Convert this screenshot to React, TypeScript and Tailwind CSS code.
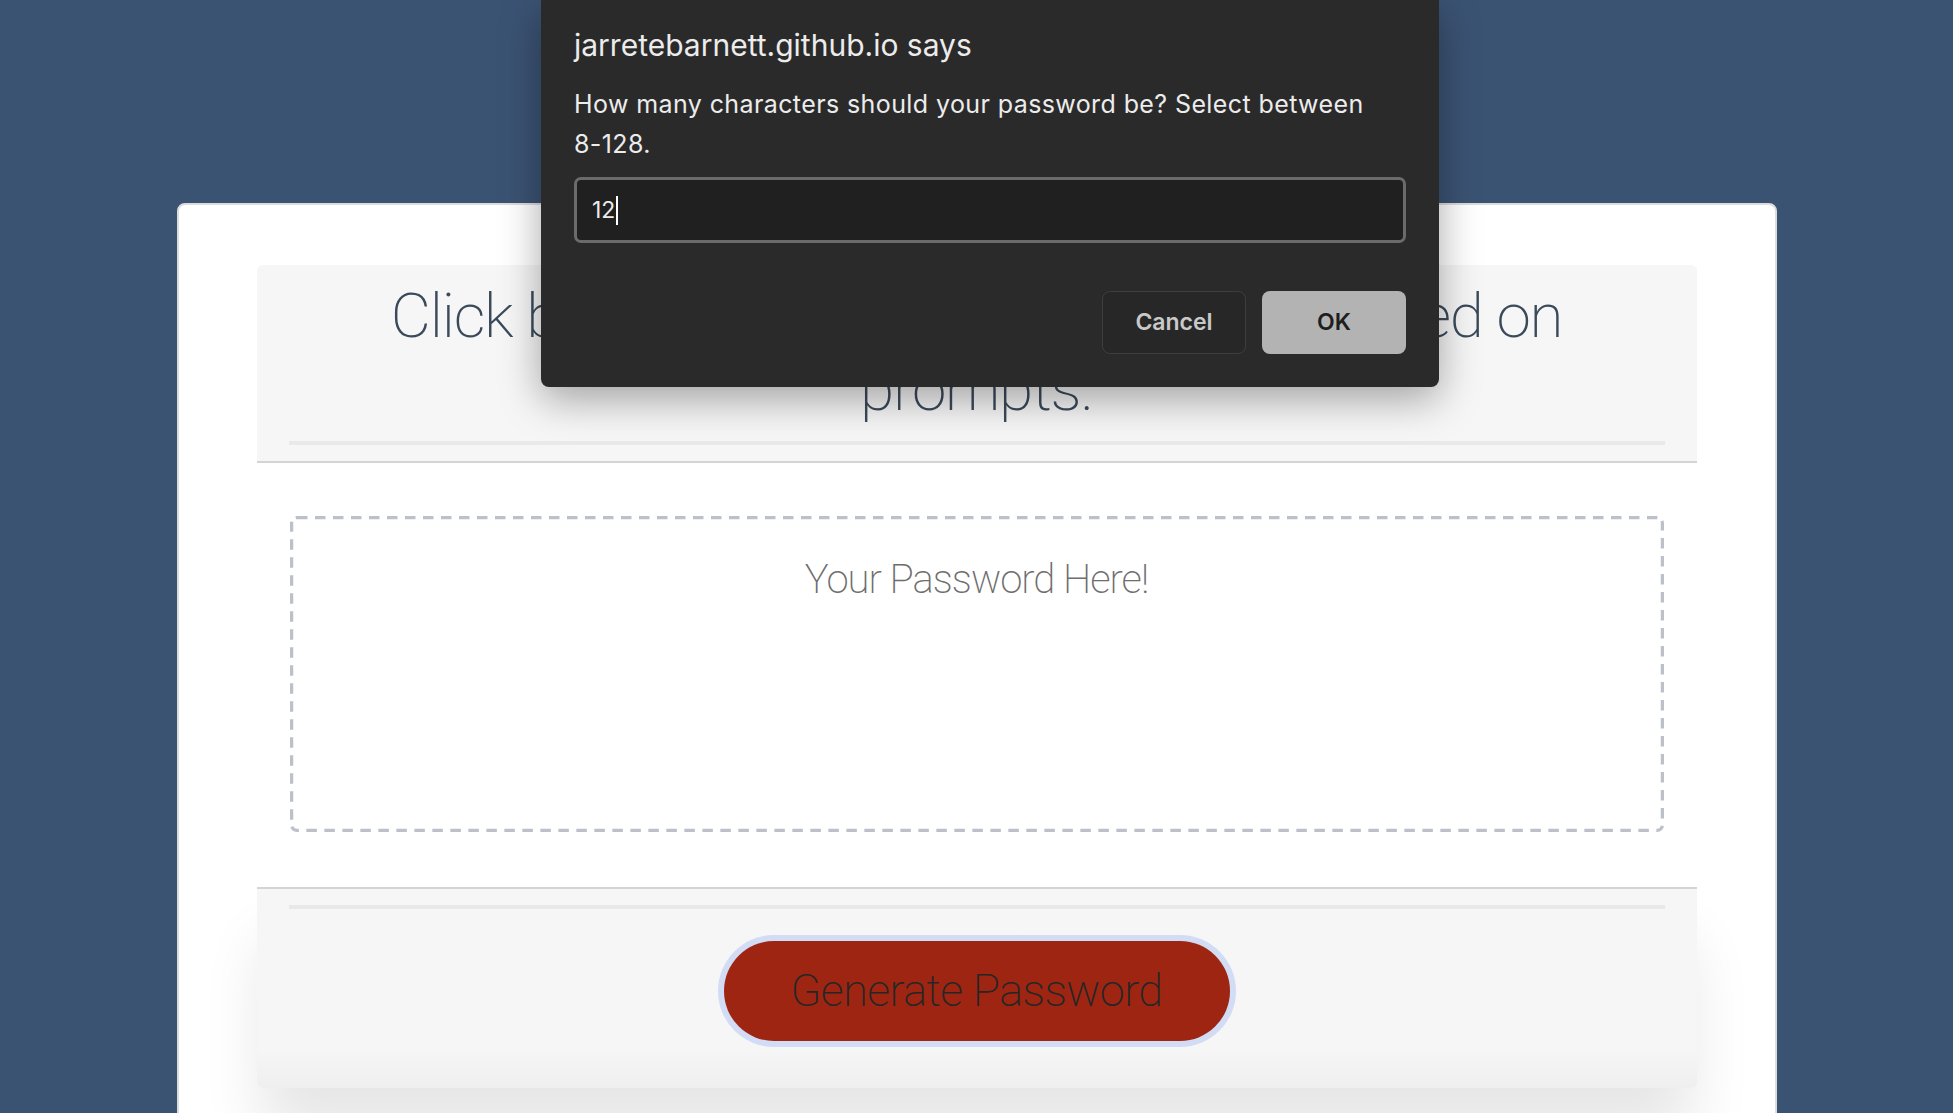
import React from "react";

export default function App() {
  return (
    <div
      className="relative h-[1113px] w-full overflow-hidden bg-[#3b5373]"
      style={{ fontFamily: "Roboto, 'Noto Sans', sans-serif" }}
    >
      {/* Page card */}
      <div className="mx-auto mt-[203px] w-[1600px] rounded-t-lg border-2 border-[#dcdcdc] bg-white px-[78px] pb-[120px] pt-[60px]">
        <div className="rounded-md bg-white">
          {/* Header */}
          <div className="rounded-t-md border-b-2 border-[#d4d4d4] bg-[#f6f6f6] px-[32px] pb-[16px] pt-[14px]">
            <h2 className="text-center text-[62px] font-extralight leading-[73px] tracking-[-1.25px] text-[#3b4a5b]">
              Click button to generate a password based on prompts.
            </h2>
            <div className="mt-[16px] h-[4px] bg-[#e8e9eb]" />
          </div>
          {/* Body */}
          <div className="px-[33px] pb-[55px] pt-[53px]">
            <div className="relative h-[316px] rounded-[7px] pt-[34px] text-center">
              <svg className="absolute inset-0 h-full w-full overflow-hidden rounded-[7px]" aria-hidden="true">
                <rect
                  x="0"
                  y="0"
                  width="100%"
                  height="100%"
                  rx="7"
                  fill="none"
                  stroke="#bcc0c9"
                  strokeWidth="6.5"
                  strokeDasharray="10.5 7.5"
                />
              </svg>
              <span className="relative text-[40px] font-extralight tracking-[-1px] text-[#6e6e6e]">
                Your Password Here!
              </span>
            </div>
          </div>
          {/* Footer */}
          <div className="rounded-b-md border-t-2 border-[#d4d4d4] bg-gradient-to-b from-[#f6f6f6] from-80% to-[#efefef] px-[32px] pb-[47px] pt-[16px] shadow-[0_50px_60px_-5px_rgba(0,0,0,0.1)]">
            <div className="h-[4px] bg-[#e8e8e8]" />
            <button className="mx-auto mt-[32px] block h-[100px] w-[506px] rounded-full bg-[#9f2513] text-[45px] font-extralight tracking-[-0.6px] text-[#262626] ring-[6px] ring-[#d3dcf5]">
              Generate Password
            </button>
          </div>
        </div>
      </div>

      {/* Prompt dialog */}
      <div
        className="absolute left-[541px] top-0 w-[898px] rounded-b-[8px] bg-[#2a2a2a] px-[33px] pb-[33px] pt-[28px] shadow-[0_12px_40px_rgba(0,0,0,0.35)]"
        style={{ fontFamily: "Inter, 'Noto Sans', sans-serif" }}
      >
        <div className="text-[30px] leading-[34px] text-[#ececec]">jarretebarnett.github.io says</div>
        <div className="mt-[22px] text-[25px] leading-[40px] tracking-[0.4px] text-[#ececec]">
          How many characters should your password be? Select between{" "}
          <span className="whitespace-nowrap">8-128.</span>
        </div>
        <div className="mt-[13px] flex h-[66px] items-center rounded-[7px] border-[3px] border-[#6b6b6b] bg-[#202020] pl-[15px]">
          <span className="text-[23px] text-[#ececec]">12</span>
          <span className="ml-[1px] h-[29px] w-[2px] bg-white" />
        </div>
        <div className="mt-[48px] flex justify-end gap-[16px]">
          <button className="h-[63px] w-[144px] rounded-[8px] border border-[#3e3e3e] bg-[#272727] text-[23px] font-semibold text-[#c9c9c9]">
            Cancel
          </button>
          <button className="h-[63px] w-[144px] rounded-[8px] bg-[#b3b3b3] text-[23px] font-semibold text-[#1e1e1e]">
            OK
          </button>
        </div>
      </div>
    </div>
  );
}
